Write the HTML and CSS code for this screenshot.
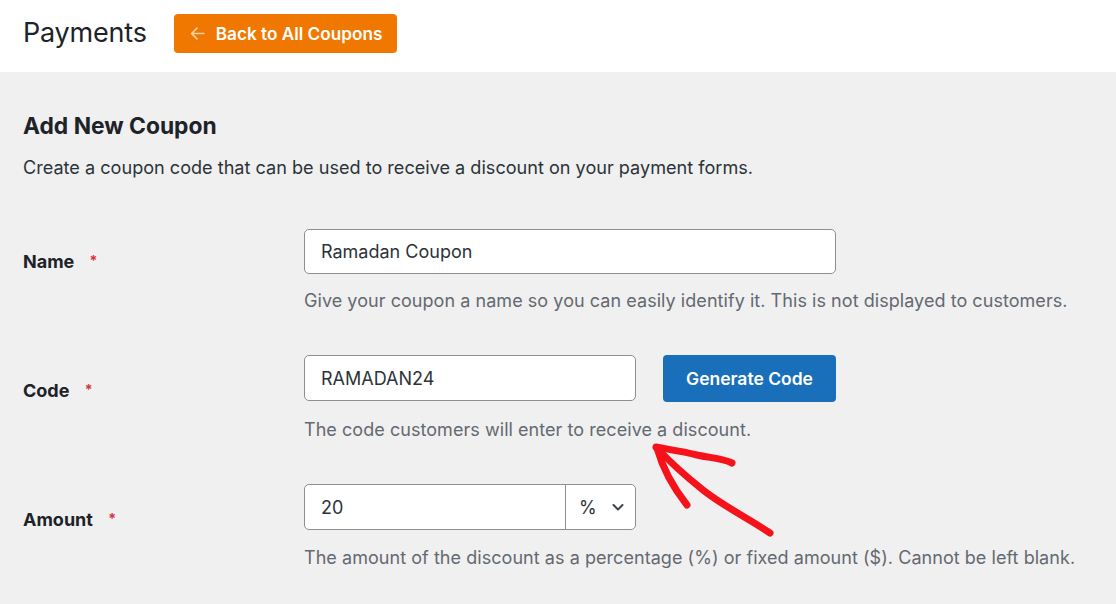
FILE: index.html
```html
<!DOCTYPE html>
<html>
<head>
<meta charset="utf-8">
<link rel="stylesheet" href="styles.css">
</head>
<body>
<header class="topbar">
  <h1 class="page-title">Payments</h1>
  <a class="back-btn" href="#">
    <svg class="back-icon" viewBox="0 0 16 16" width="17" height="17"><path d="M14 8H2.5M7.5 3L2.5 8l5 5" fill="none" stroke="currentColor" stroke-width="1.6" stroke-linecap="round" stroke-linejoin="round"/></svg>
    <span>Back to All Coupons</span>
  </a>
</header>
<main class="content">
  <h2 class="section-title">Add New Coupon</h2>
  <p class="section-desc">Create a coupon code that can be used to receive a discount on your payment forms.</p>

  <div class="form-row row-name">
    <label class="field-label">Name <span class="req">*</span></label>
    <div class="field">
      <div class="input name-input">Ramadan Coupon</div>
      <p class="help">Give your coupon a name so you can easily identify it. This is not displayed to customers.</p>
    </div>
  </div>

  <div class="form-row row-code">
    <label class="field-label label-low">Code <span class="req">*</span></label>
    <div class="field">
      <div class="code-line">
        <div class="input code-input">RAMADAN24</div>
        <button class="gen-btn">Generate Code</button>
      </div>
      <p class="help help-code">The code customers will enter to receive a discount.</p>
    </div>
  </div>

  <div class="form-row row-amount">
    <label class="field-label label-low">Amount <span class="req">*</span></label>
    <div class="field">
      <div class="amount-box">
        <div class="amount-value">20</div>
        <div class="amount-type">
          <span>%</span>
          <svg viewBox="0 0 14 14" width="14" height="14"><path d="M2.5 5l4.5 4.5L11.5 5" fill="none" stroke="#3c434a" stroke-width="2" stroke-linecap="round" stroke-linejoin="round"/></svg>
        </div>
      </div>
      <p class="help help-amount">The amount of the discount as a percentage (%) or fixed amount ($). Cannot be left blank.</p>
    </div>
  </div>

  <svg class="annot" viewBox="0 0 150 110" width="150" height="110">
    <path d="M132 95 C 110 80, 85 68, 65 52 C 45 36, 30 22, 19 10" fill="none" stroke="#f5121b" stroke-width="7" stroke-linecap="round"/>
    <path d="M19 10 C 24 28, 34 48, 49 67" fill="none" stroke="#f5121b" stroke-width="7" stroke-linecap="round"/>
    <path d="M18 9 C 35 12, 48 14, 59 17 C 72 20, 84 20, 94 25" fill="none" stroke="#f5121b" stroke-width="7" stroke-linecap="round"/>
  </svg>
</main>
</body>
</html>
```
FILE: styles.css
```css
* { box-sizing: border-box; }
html, body { margin: 0; padding: 0; }
body {
  width: 1116px;
  height: 604px;
  overflow: hidden;
  background: #f0f0f1;
  font-family: Inter, "Noto Sans", "Liberation Sans", sans-serif;
  color: #1d2327;
}
.topbar {
  height: 72px;
  background: #fff;
  display: flex;
  align-items: center;
  padding: 0 23px;
  gap: 27px;
}
.page-title {
  margin: 0;
  font-size: 27px;
  font-weight: 400;
  color: #1d2327;
  letter-spacing: -0.2px;
  position: relative;
  top: -4px;
}
.back-btn {
  display: flex;
  align-items: center;
  gap: 10px;
  height: 39px;
  padding: 0 15px 0 15px;
  background: #f07800;
  border-radius: 4px;
  color: #fff;
  text-decoration: none;
  font-size: 17.2px;
  font-weight: 600;
  position: relative;
  top: -3px;
}
.back-icon { color: rgba(255,255,255,0.65); }
.content {
  position: relative;
  padding: 38px 23px 0;
}
.section-title {
  margin: 0;
  font-size: 22.8px;
  font-weight: 700;
  line-height: 32px;
}
.section-desc {
  margin: 12px 0 0;
  font-size: 18.1px;
  line-height: 26px;
  color: #2c3338;
}
.form-row {
  display: grid;
  grid-template-columns: 281px 1fr;
}
.row-name { margin-top: 49px; }
.row-code { margin-top: 41px; }
.row-amount { margin-top: 41px; }
.field-label {
  font-size: 18px;
  font-weight: 700;
  color: #1d2327;
  padding-top: 20px;
  line-height: 24px;
}
.label-low { padding-top: 23px; }
.req {
  color: #d63638;
  font-size: 14px;
  margin-left: 11px;
  vertical-align: 2px;
}
.input {
  height: 45px;
  background: #fff;
  border: 1px solid #8c8f94;
  border-radius: 5px;
  padding: 0 16px;
  display: flex;
  align-items: center;
  font-size: 18px;
  color: #2c3338;
}
.name-input { width: 532px; }
.code-line { display: flex; gap: 27px; align-items: flex-start; }
.code-input { width: 332px; height: 46px; }
.gen-btn {
  height: 47px;
  width: 173px;
  border: none;
  border-radius: 4px;
  background: #1a6fba;
  color: #fff;
  font-family: inherit;
  font-size: 17.5px;
  font-weight: 600;
  padding: 0;
}
.help {
  margin: 14px 0 0;
  font-size: 18px;
  line-height: 26px;
  color: #646970;
  letter-spacing: 0.05px;
}
.help-code { margin-top: 15px; }
.help-amount { margin-top: 15px; }
.amount-box {
  width: 332px;
  height: 46px;
  display: flex;
  background: #fff;
  border: 1px solid #8c8f94;
  border-radius: 5px;
}
.amount-value {
  width: 261px;
  border-right: 1px solid #8c8f94;
  padding: 0 16px;
  display: flex;
  align-items: center;
  font-size: 18px;
  color: #2c3338;
}
.amount-type {
  flex: 1;
  display: flex;
  align-items: center;
  justify-content: space-between;
  padding: 0 10px 0 13px;
  font-size: 18px;
  color: #2c3338;
}
.annot {
  position: absolute;
  left: 638px;
  top: 366px;
}
```
